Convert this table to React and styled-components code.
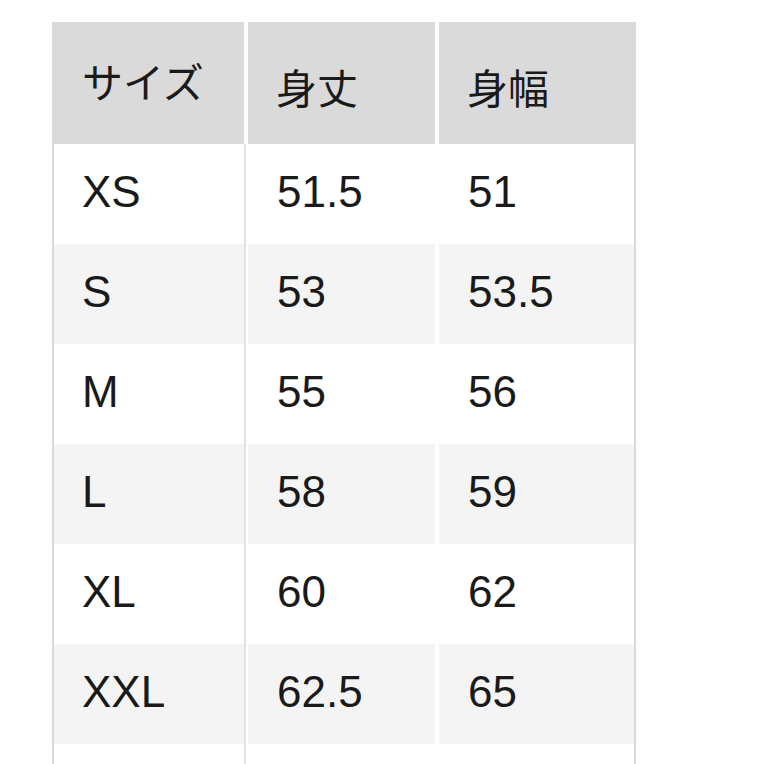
import React from "react";
import styled, { createGlobalStyle } from "styled-components";

const rows = [
  { size: "XS", length: "51.5", width: "51" },
  { size: "S", length: "53", width: "53.5" },
  { size: "M", length: "55", width: "56" },
  { size: "L", length: "58", width: "59" },
  { size: "XL", length: "60", width: "62" },
  { size: "XXL", length: "62.5", width: "65" },
];

const GlobalStyle = createGlobalStyle`
  html, body {
    margin: 0;
    padding: 0;
    background: #fff;
    height: 100%;
    overflow: hidden;
  }
  body {
    font-family: "Liberation Sans", "Noto Sans CJK JP", sans-serif;
    color: #1a1a1a;
  }
`;

const Page = styled.div`
  padding: 22px 0 0 52px;
`;

const Table = styled.div`
  width: 580px;
  display: grid;
  grid-template-columns: 190px 187px 195px;
  column-gap: 4px;
  border-left: 2px solid #d9d9d9;
  border-right: 2px solid #d9d9d9;
  background: #fff;
`;

const HeadCell = styled.div`
  height: 122px;
  background: #dadada;
  display: flex;
  align-items: center;
  padding: 6px 0 ${(p) => p.$lift || 0}px 28px;
  box-sizing: border-box;
  font-family: "Noto Sans CJK JP", "Liberation Sans", sans-serif;
  font-size: 41px;
  line-height: 1;
`;

const Cell = styled.div`
  height: 100px;
  background: ${(p) => (p.$shaded ? "#f4f4f4" : "#ffffff")};
  display: flex;
  align-items: center;
  padding: 0 0 5px ${(p) => (p.$first ? 28 : 29)}px;
  box-sizing: border-box;
  font-size: 44px;
  line-height: 1;
  border-right: ${(p) => (p.$first ? "2px solid #e2e2e2" : "none")};
  margin-right: ${(p) => (p.$first ? "-2px" : "0")};
`;

const App = () => {
  return (
    <>
      <GlobalStyle />
      <Page>
        <Table>
          <HeadCell $lift={12}>サイズ</HeadCell>
          <HeadCell>身丈</HeadCell>
          <HeadCell>身幅</HeadCell>
          {rows.map((row, i) => (
            <React.Fragment key={row.size}>
              <Cell $shaded={i % 2 === 1} $first>
                {row.size}
              </Cell>
              <Cell $shaded={i % 2 === 1}>{row.length}</Cell>
              <Cell $shaded={i % 2 === 1}>{row.width}</Cell>
            </React.Fragment>
          ))}
          <Cell $first />
          <Cell />
          <Cell />
        </Table>
      </Page>
    </>
  );
};

export default App;
